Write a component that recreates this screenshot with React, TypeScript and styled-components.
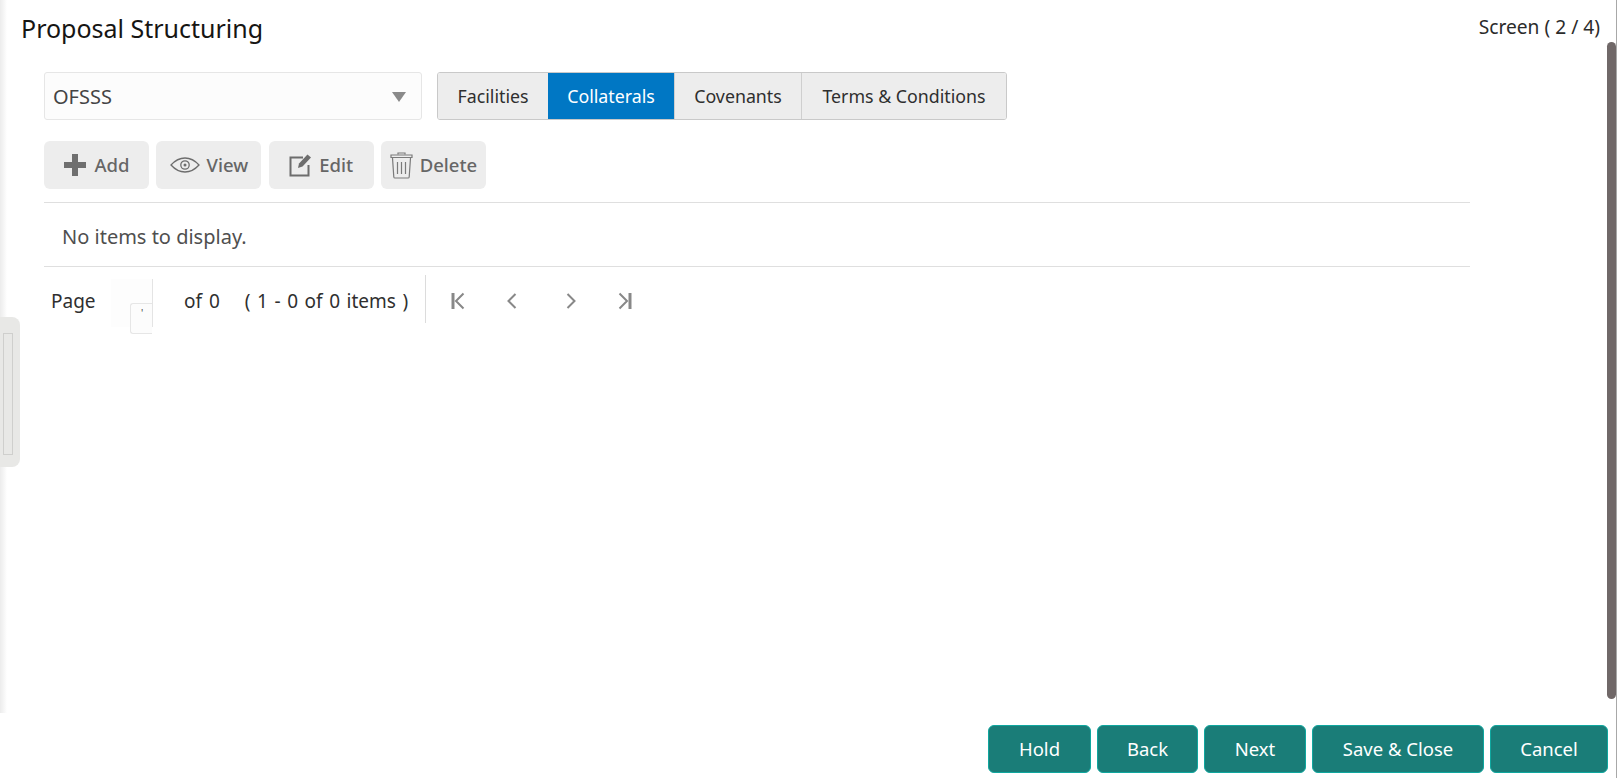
import React from "react";
import styled, { createGlobalStyle } from "styled-components";

const Global = createGlobalStyle`
  html, body { margin: 0; padding: 0; background: #fff; }
  body { font-family: "Noto Sans", "Open Sans", "Liberation Sans", sans-serif; overflow: hidden; }
  * { box-sizing: border-box; }
`;

const Shell = styled.div`
  position: relative;
  width: 1617px;
  height: 778px;
  display: flex;
  flex-direction: column;
  overflow: hidden;
  background: #fff;
`;

const Main = styled.main`
  height: 713px;
  padding-left: 21px;
  background: linear-gradient(90deg, #ececec 0, #f6f6f6 4px, #ffffff 7px);
`;

const Header = styled.header`
  display: flex;
  justify-content: space-between;
  align-items: flex-start;
  height: 72px;
  padding-right: 17px;
`;

const Title = styled.h1`
  margin: 10px 0 0;
  font-size: 25px;
  line-height: 36px;
  font-weight: 400;
  color: #161513;
`;

const ScreenCount = styled.div`
  margin-top: 14px;
  font-size: 19.2px;
  line-height: 26px;
  color: #2b2b2b;
`;

const Content = styled.div`
  width: 1426px;
  margin-left: 23px;
`;

const SelectorRow = styled.div`
  display: flex;
  align-items: stretch;
  gap: 15px;
  height: 48px;
`;

const SelectBox = styled.div`
  width: 378px;
  display: flex;
  align-items: center;
  justify-content: space-between;
  padding: 0 15px 0 8px;
  background: #fcfcfc;
  border: 1px solid #e6e6e6;
  border-radius: 3px;
  font-size: 20px;
  color: #444;
`;

const Caret = styled.span`
  width: 0;
  height: 0;
  margin-top: 2px;
  border-left: 7px solid transparent;
  border-right: 7px solid transparent;
  border-top: 10px solid #8a8a8a;
`;

const TabGroup = styled.div`
  display: flex;
  border: 1px solid #c9c9c9;
  border-radius: 3px;
  overflow: hidden;
`;

const Tab = styled.div<{ $w: number; $active?: boolean }>`
  width: ${(p) => p.$w}px;
  display: flex;
  align-items: center;
  justify-content: center;
  font-size: 17.8px;
  background: ${(p) => (p.$active ? "#0077c4" : "#ededed")};
  color: ${(p) => (p.$active ? "#fff" : "#2f2f2f")};
  border-left: ${(p) => (p.$active ? "none" : "1px solid #cfcfcf")};
  &:first-child { border-left: none; }
`;

const Toolbar = styled.div`
  display: flex;
  gap: 7.3px;
  margin-top: 21px;
  padding-bottom: 13px;
  border-bottom: 1px solid #dfdfdf;
`;

const ActionButton = styled.div`
  width: 105px;
  height: 48px;
  display: flex;
  align-items: center;
  justify-content: center;
  gap: 7px;
  background: #ededed;
  border-radius: 6px;
  font-size: 18.5px;
  font-weight: 500;
  color: #666;
  svg { flex: none; }
`;

const ActionLabel = styled.span`
  margin-bottom: 2px;
`;

const EmptyRow = styled.div`
  height: 64px;
  display: flex;
  align-items: center;
  padding: 4px 0 0 18px;
  border-bottom: 1px solid #dfdfdf;
  font-size: 20px;
  color: #4f4f4f;
`;

const Pager = styled.div`
  display: flex;
  align-items: center;
  height: 48px;
  margin-top: 8px;
  padding-left: 7px;
  font-size: 19px;
  color: #2f2f2f;
`;

const PageLabel = styled.span`
  width: 60px;
  padding-top: 4px;
`;

const PageInput = styled.div`
  position: relative;
  width: 42px;
  height: 48px;
  margin-top: 8px;
  margin-right: 31px;
  background: #fdfdfd;
  border-right: 1px solid #e4e4e4;
`;

const PageInputDrop = styled.div`
  position: absolute;
  left: 19px;
  top: 24px;
  width: 22px;
  height: 31px;
  padding: 4px 0 0 10px;
  background: #fcfcfc;
  border: 1px solid #e6e6e6;
  border-right: none;
  border-radius: 3px 0 0 3px;
  font-size: 10px;
  line-height: 10px;
  color: #444;
`;

const PageOf = styled.span`
  padding-top: 4px;
  word-spacing: 2px;
`;

const PageRange = styled.span`
  margin-left: 25px;
  padding-top: 4px;
  word-spacing: 1.6px;
`;

const PagerDivider = styled.div`
  width: 1px;
  height: 48px;
  margin-left: 17px;
  background: #dcdcdc;
`;

const PagerNav = styled.div<{ $gap: number }>`
  display: flex;
  align-items: center;
  margin-left: ${(p) => p.$gap}px;
  padding-top: 4px;
  color: #888;
`;

const Footer = styled.footer`
  height: 65px;
  display: flex;
  justify-content: flex-end;
  gap: 6px;
  padding: 12px 9px 0 0;
`;

const FooterButton = styled.div<{ $w: number }>`
  width: ${(p) => p.$w}px;
  height: 48px;
  display: flex;
  align-items: center;
  justify-content: center;
  padding-bottom: 2px;
  background: #1a7d78;
  border: 1px solid #0fa79f;
  border-radius: 6px;
  color: #fff;
  font-size: 18.5px;
`;

const SideHandle = styled.div`
  position: absolute;
  left: 0;
  top: 317px;
  width: 20px;
  height: 150px;
  padding: 16px 8px 12px 3px;
  background: #e8e8e6;
  border-radius: 0 8px 8px 0;
`;

const HandleGrip = styled.div`
  width: 10px;
  height: 100%;
  border: 1px solid #cfcfcd;
`;

const ScrollTrack = styled.div`
  position: absolute;
  right: 0;
  top: 0;
  width: 1px;
  height: 100%;
  background: #a8a8a8;
`;

const ScrollThumb = styled.div`
  position: absolute;
  right: 1px;
  top: 42px;
  width: 9px;
  height: 657px;
  background: #706868;
  border-radius: 5px;
`;

const PlusIcon = () => (
  <svg width="24" height="24" viewBox="0 0 24 24">
    <path d="M9 1h6v8h8v6h-8v8h-6v-8h-8v-6h8z" fill="#6f6f6f" />
  </svg>
);

const EyeIcon = () => (
  <svg width="30" height="16" viewBox="0 0 30 16" fill="none" stroke="#6d6d6d" strokeWidth="1.300">
    <path d="M1 8C5.500 3 10 1 15 1s9.500 2 14 7c-4.500 5-9 7-14 7S5.500 13 1 8z" />
    <circle cx="15" cy="8" r="4.200" />
    <circle cx="15" cy="8" r="1.500" fill="#6d6d6d" stroke="none" />
  </svg>
);

const EditIcon = () => (
  <svg width="23" height="23" viewBox="0 0 23 23" fill="none">
    <path d="M14 3.500H1.500v18h18V11" stroke="#6d6d6d" strokeWidth="2" />
    <path d="M18.500 0.500l3.500 3-8.500 9-4.500 1.500 1-4.500z" fill="#6d6d6d" />
  </svg>
);

const TrashIcon = () => (
  <svg width="23" height="27" viewBox="0 0 23 27" fill="none" stroke="#7a7a7a" strokeWidth="1.200">
    <path d="M8 2.500V1h7v1.500" />
    <path d="M1 3h21v2.500H1z" />
    <path d="M2.500 6l1.300 19a1.200 1.200 0 0 0 1.200 1h13a1.200 1.200 0 0 0 1.200-1L20.500 6" />
    <path d="M7.500 10v12M11.500 10v12M15.500 10v12" />
  </svg>
);

const FirstIcon = () => (
  <svg width="14" height="18" viewBox="0 0 14 18" fill="none" stroke="currentColor">
    <path d="M2 1v16" strokeWidth="3" />
    <path d="M12.500 1.500L5 9l7.500 7.500" strokeWidth="2" />
  </svg>
);
const PrevIcon = () => (
  <svg width="11" height="18" viewBox="0 0 11 18" fill="none" stroke="currentColor" strokeWidth="2">
    <path d="M9.500 2L2.500 9l7 7" />
  </svg>
);
const NextIcon = () => (
  <svg width="11" height="18" viewBox="0 0 11 18" fill="none" stroke="currentColor" strokeWidth="2">
    <path d="M1.500 2l7 7-7 7" />
  </svg>
);
const LastIcon = () => (
  <svg width="14" height="18" viewBox="0 0 14 18" fill="none" stroke="currentColor">
    <path d="M12 1v16" strokeWidth="3" />
    <path d="M1.500 1.500L9 9l-7.500 7.500" strokeWidth="2" />
  </svg>
);

const tabs = [
  { label: "Facilities", w: 110 },
  { label: "Collaterals", w: 126 },
  { label: "Covenants", w: 127 },
  { label: "Terms & Conditions", w: 205 },
];

const footerButtons = [
  { label: "Hold", w: 103 },
  { label: "Back", w: 101 },
  { label: "Next", w: 102 },
  { label: "Save & Close", w: 172 },
  { label: "Cancel", w: 118 },
];

export default function App() {
  return (
    <Shell>
      <Global />
      <Main>
        <Header>
          <Title>Proposal Structuring</Title>
          <ScreenCount>Screen ( 2 / 4)</ScreenCount>
        </Header>
        <Content>
          <SelectorRow>
            <SelectBox>
              OFSSS
              <Caret />
            </SelectBox>
            <TabGroup>
              {tabs.map((t) => (
                <Tab key={t.label} $w={t.w} $active={t.label === "Collaterals"}>
                  {t.label}
                </Tab>
              ))}
            </TabGroup>
          </SelectorRow>
          <Toolbar>
            <ActionButton><PlusIcon /><ActionLabel>Add</ActionLabel></ActionButton>
            <ActionButton><EyeIcon /><ActionLabel>View</ActionLabel></ActionButton>
            <ActionButton><EditIcon /><ActionLabel>Edit</ActionLabel></ActionButton>
            <ActionButton><TrashIcon /><ActionLabel>Delete</ActionLabel></ActionButton>
          </Toolbar>
          <EmptyRow>No items to display.</EmptyRow>
          <Pager>
            <PageLabel>Page</PageLabel>
            <PageInput>
              <PageInputDrop>'</PageInputDrop>
            </PageInput>
            <PageOf>of 0</PageOf>
            <PageRange>( 1 - 0 of 0 items )</PageRange>
            <PagerDivider />
            <PagerNav $gap={25}><FirstIcon /></PagerNav>
            <PagerNav $gap={41}><PrevIcon /></PagerNav>
            <PagerNav $gap={49}><NextIcon /></PagerNav>
            <PagerNav $gap={41}><LastIcon /></PagerNav>
          </Pager>
        </Content>
      </Main>
      <Footer>
        {footerButtons.map((b) => (
          <FooterButton key={b.label} $w={b.w}>
            {b.label}
          </FooterButton>
        ))}
      </Footer>
      <SideHandle>
        <HandleGrip />
      </SideHandle>
      <ScrollThumb />
      <ScrollTrack />
    </Shell>
  );
}
